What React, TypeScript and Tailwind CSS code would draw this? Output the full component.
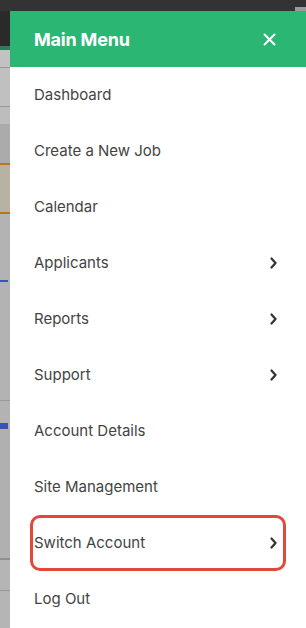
import React from 'react';

const items: { label: string; arrow?: boolean; active?: boolean }[] = [
  { label: 'Dashboard' },
  { label: 'Create a New Job' },
  { label: 'Calendar' },
  { label: 'Applicants', arrow: true },
  { label: 'Reports', arrow: true },
  { label: 'Support', arrow: true },
  { label: 'Account Details' },
  { label: 'Site Management' },
  { label: 'Switch Account', arrow: true, active: true },
  { label: 'Log Out' },
];

const Chevron = () => (
  <svg width="10" height="12" viewBox="0 0 10 12" fill="none">
    <path d="M3.5 1.5 L7.5 6 L3.5 10.5" stroke="#333" strokeWidth="2.2" strokeLinecap="round" strokeLinejoin="round" />
  </svg>
);

const Backdrop = () => (
  <div className="w-[10px] shrink-0 flex flex-col bg-[#b3b3b3]">
    <div className="h-[35px] bg-[#2a2a2a]" />
    <div className="h-[4px] bg-[#2f7d58]" />
    <div className="h-[17px] bg-[#c2c2c2]" />
    <div className="h-[1px] bg-[#999]" />
    <div className="h-[38px] bg-[#c0c0c0]" />
    <div className="h-[1px] bg-[#999]" />
    <div className="h-[17px] bg-[#bdbdbd]" />
    <div className="h-[39px] bg-[#ababab]" />
    <div className="h-[2px] bg-[#b8761d]" />
    <div className="h-[47px] bg-[#b8b2a4]" />
    <div className="h-[2px] bg-[#b8761d]" />
    <div className="h-[66px] bg-[#b3b3b3]" />
    <div className="h-[2px] w-[8px] bg-[#3a53b0]" />
    <div className="h-[118px] bg-[#b3b3b3]" />
    <div className="h-[1px] bg-[#999]" />
    <div className="h-[22px] bg-[#b3b3b3]" />
    <div className="h-[6px] w-[8px] bg-[#3a53b0]" />
    <div className="h-[129px] bg-[#b0b0b0]" />
    <div className="h-[2px] bg-[#8e8e8e]" />
    <div className="h-[30px] bg-[#b5b5b5]" />
    <div className="h-[1px] bg-[#999]" />
    <div className="flex-1 bg-[#b5b5b5]" />
  </div>
);

const App = () => {
  return (
    <div className="w-[306px] h-[628px] overflow-hidden flex flex-col bg-[#b3b3b3]" style={{ fontFamily: 'Inter, "Open Sans", sans-serif' }}>
      <div className="h-[11px] shrink-0 flex bg-[#333]">
        <div className="flex-1" />
        <div className="w-[11px] mt-[7px] bg-[#9a9a9a]" />
      </div>
      <div className="flex flex-1 min-h-0">
        <Backdrop />
        <div className="flex-1 bg-white flex flex-col">
          <div className="h-[56px] bg-[#2bb673] flex items-center justify-between pl-[24px] pr-[30px]">
            <span className="text-white text-[18px] font-bold tracking-[-0.2px]">Main Menu</span>
            <svg width="13" height="13" viewBox="0 0 13 13">
              <path d="M1.5 1.5 L11.5 11.5 M11.5 1.5 L1.5 11.5" stroke="white" strokeWidth="2" strokeLinecap="round" />
            </svg>
          </div>
          {items.map((it) => (
            <div key={it.label} className="h-[56px] px-[20px] flex items-center">
              {it.active ? (
                <div className="flex-1 h-[56px] flex items-center justify-between pl-[1px] pr-[5px] rounded-[10px] border-[3px] border-[#e2483a]">
                  <span className="text-[15px] text-[#444]">{it.label}</span>
                  {it.arrow && <Chevron />}
                </div>
              ) : (
                <div className="flex-1 h-[56px] flex items-center justify-between pl-[4px] pr-[8px]">
                  <span className="text-[15px] text-[#444]">{it.label}</span>
                  {it.arrow && <Chevron />}
                </div>
              )}
            </div>
          ))}
        </div>
      </div>
    </div>
  );
};

export default App;
